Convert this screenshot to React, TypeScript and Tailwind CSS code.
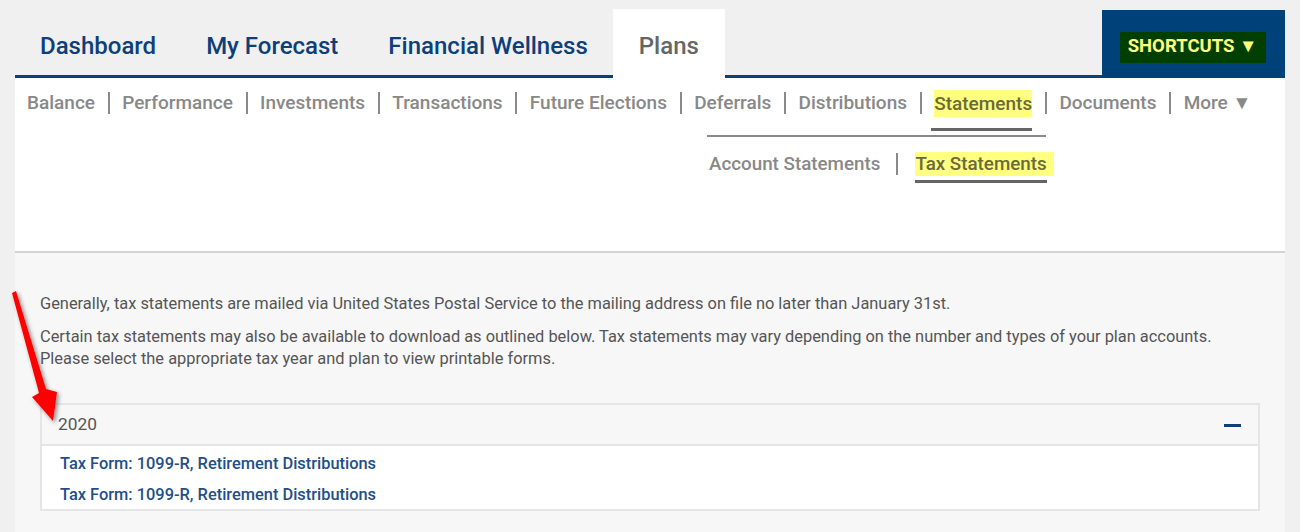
import { FC } from 'react';

const topTabs = ['Dashboard', 'My Forecast', 'Financial Wellness'];
const subNav = [
  'Balance',
  'Performance',
  'Investments',
  'Transactions',
  'Future Elections',
  'Deferrals',
  'Distributions',
  'Statements',
  'Documents',
];

const Sep: FC = () => <span className="mx-[12.6px] h-[22px] w-[2px] bg-[#8a8a8a]" />;

const RedArrow: FC = () => (
  <svg
    className="pointer-events-none absolute left-0 top-[286px]"
    width="70"
    height="145"
    viewBox="0 0 70 145"
  >
    <defs>
      <filter id="sh" x="-50%" y="-50%" width="200%" height="200%">
        <feDropShadow dx="2" dy="2" stdDeviation="2" floodColor="#000" floodOpacity="0.45" />
      </filter>
    </defs>
    <polygon
      points="12,7 16,5 46,103 57,106 53,135 32,111 39,107"
      fill="#ff0000"
      filter="url(#sh)"
    />
  </svg>
);

export default function App() {
  return (
    <div
      className="relative min-h-[532px] w-[1300px] overflow-hidden bg-[#f0f0f0] pl-[15px] pr-[15px]"
      style={{ fontFamily: 'Roboto, "Noto Sans", Arial, sans-serif' }}
    >
      {/* top tabs */}
      <div className="flex h-[78px] items-end">
        {topTabs.map((t) => (
          <div
            key={t}
            className="flex h-[69px] items-center border-b-[3px] border-[#0d3f7a] px-[25px] pt-[8px] text-[24px] font-medium text-[#0d3f7a]"
          >
            {t}
          </div>
        ))}
        <div className="flex h-[69px] items-center bg-white px-[26px] pt-[5px] text-[24px] font-medium text-[#666666]">
          Plans
        </div>
        <div className="h-[69px] flex-1 border-b-[3px] border-[#0d3f7a]" />
        <div className="flex h-[68px] w-[183px] items-center justify-center bg-[#00417a] pr-[2px] pt-[6px]">
          <span className="flex h-[31px] w-[146px] items-center justify-center bg-[#003f00] text-[18.5px] font-bold text-[#ffff80]">
            SHORTCUTS ▼
          </span>
        </div>
      </div>

      {/* sub navigation */}
      <div className="h-[175px] border-b-2 border-[#d3d3d3] bg-white">
        <div className="flex h-[50px] items-center whitespace-nowrap pl-[12px] text-[19px] font-medium text-[#888888]">
          {subNav.map((s) => (
            <div key={s} className="flex items-center">
              {s === 'Statements' ? (
                <span className="relative bg-[#ffff80] leading-[27px] text-[#6b6b3a]">
                  {s}
                  <span className="absolute left-[-3px] right-0 top-[38px] h-[3px] bg-[#666666]" />
                </span>
              ) : (
                <span>{s}</span>
              )}
              <Sep />
            </div>
          ))}
          <span>More ▼</span>
        </div>
        <div className="ml-[692px] mt-[7px] w-[339px] border-t-2 border-[#8a8a8a] pt-[13px]">
          <div className="flex items-center whitespace-nowrap text-[18.8px] font-medium text-[#888888]">
            <span className="pl-[2px]">Account Statements</span>
            <span className="ml-[16px] mr-[17px] h-[22px] w-[2px] shrink-0 bg-[#8a8a8a]" />
            <span className="relative bg-[#ffff80] pr-[7px] leading-[24px] text-[#6b6b3a]">
              Tax Statements
              <span className="absolute left-0 right-[7px] top-[28px] h-[3px] bg-[#666666]" />
            </span>
          </div>
        </div>
      </div>

      {/* content */}
      <div className="h-[280px] bg-[#f7f7f7] px-[25px] pt-[40px] text-[16.4px] text-[#555555]">
        <p className="leading-[22px]">
          Generally, tax statements are mailed via United States Postal Service to the mailing address on file no
          later than January 31st.
        </p>
        <p className="mt-[11px] leading-[22px]">
          Certain tax statements may also be available to download as outlined below. Tax statements may vary
          depending on the number and types of your plan accounts.
          <br />
          Please select the appropriate tax year and plan to view printable forms.
        </p>

        <div className="mt-[33px] border-2 border-[#e5e5e5]">
          <div className="flex h-[41px] items-center justify-between border-b-2 border-[#e5e5e5] bg-[#f7f7f7] pl-[16px] pr-[16px] pt-[1px]">
            <span className="text-[17.3px] text-[#555555]">2020</span>
            <span className="mr-[1px] h-[3px] w-[17px] bg-[#0d3f7a]" />
          </div>
          <div className="bg-white pb-[3px] pl-[18px] pt-[7px]">
            <div className="h-[31px] text-[16.4px] font-medium leading-[22px] text-[#1f4f8a]">
              Tax Form: 1099-R, Retirement Distributions
            </div>
            <div className="h-[22px] text-[16.4px] font-medium leading-[22px] text-[#1f4f8a]">
              Tax Form: 1099-R, Retirement Distributions
            </div>
          </div>
        </div>
      </div>

      <RedArrow />
    </div>
  );
}
